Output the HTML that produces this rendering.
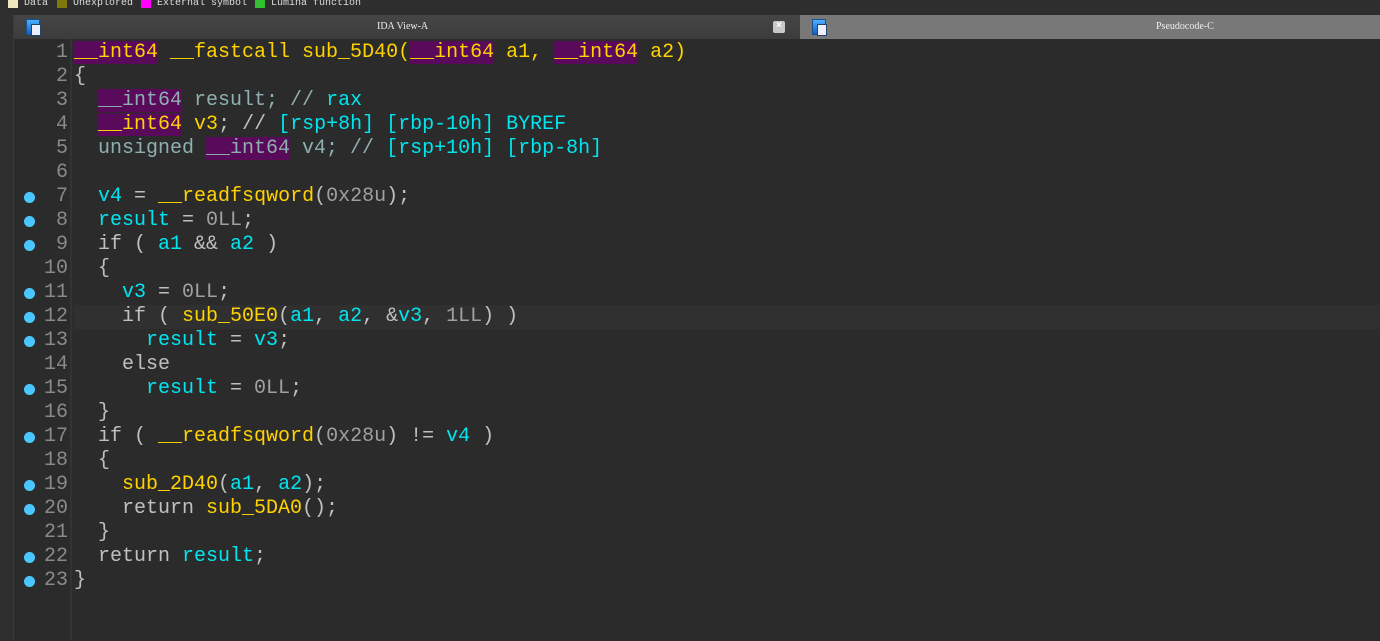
<!DOCTYPE html>
<html><head><style>
body{margin:0;width:1380px;height:641px;background:#2b2b2b;overflow:hidden;position:relative;font-family:"Liberation Mono",monospace}
.legend{position:absolute;top:0;left:0;height:14px;width:1380px;background:#2e2e2e;font-size:10px;color:#ddd;line-height:8px;white-space:pre}
.legend span{position:absolute;top:0}
.sw{width:10px;height:8px}
.left{position:absolute;left:0;top:14px;width:13px;height:627px;background:#2f2f2f;border-right:1px solid #3a3a3a}
.tabs{position:absolute;top:15px;left:14px;width:1366px;height:24px}
.t1{position:absolute;left:0;top:0;width:786px;height:24px;background:linear-gradient(#454545,#3c3c3c)}
.t2{position:absolute;left:786px;top:0;width:580px;height:24px;background:#787878}
.tt{position:absolute;top:6px;font-size:10px;color:#eee;font-family:"Liberation Serif",serif}
.ic{position:absolute;top:4px;width:12px;height:14px;background:linear-gradient(#4ab0ff,#1560c0);border:1px solid #1a4f90}
.ic:after{content:"";position:absolute;left:4px;top:4px;width:8px;height:10px;background:#eef;border:1px solid #246}
.x{position:absolute;left:759px;top:6px;width:12px;height:12px;background:#c8c8c8;border-radius:2px;color:#fff;font-size:10px;line-height:12px;text-align:center;font-weight:bold}
.code{position:absolute;top:41px;left:14px;width:1366px}
.gut{position:absolute;left:70px;top:39px;width:2px;height:602px;background:#333}
.ln{height:24px;line-height:24px;font-size:20px;white-space:pre;position:relative}
.n{position:absolute;left:0;width:54px;text-align:right;color:#8a8a8a}
.c{position:absolute;left:60px;color:#c0c0c0}
.d{position:absolute;left:10px;top:7px;width:11px;height:11px;border-radius:50%;background:#4cc6ff}
.hl{background:#303030}
.y{color:#ffd200}.v{color:#00e6f0}.g{color:#a0a0a0}.t{color:#8fb0b0}
.p{background:#5a0a5a}
</style></head><body>
<div class="legend"><span class="sw" style="background:#eee8c0;left:8px"></span><span style="left:24px">Data</span><span class="sw" style="background:#80780a;left:57px"></span><span style="left:73px">Unexplored</span><span class="sw" style="background:#ff00ff;left:141px"></span><span style="left:157px">External symbol</span><span class="sw" style="background:#30c030;left:255px"></span><span style="left:271px">Lumina function</span></div>
<div class="left"></div>
<div class="tabs"><div class="t1"><div class="ic" style="left:12px"></div><span class="tt" style="left:363px">IDA View-A</span><div class="x">×</div></div>
<div class="t2"><div class="ic" style="left:12px"></div><span class="tt" style="left:356px">Pseudocode-C</span></div></div>
<div class="gut"></div>
<div class="code">
<div class="ln"><span class="n">1</span><span class="c"><span class="y p">__int64</span> <span class="y">__fastcall sub_5D40(</span><span class="y p">__int64</span><span class="y"> a1, </span><span class="y p">__int64</span><span class="y"> a2)</span></span></div>
<div class="ln"><span class="n">2</span><span class="c">{</span></div>
<div class="ln"><span class="n">3</span><span class="c t">  <span class="p">__int64</span> result; // <span class="v">rax</span></span></div>
<div class="ln"><span class="n">4</span><span class="c">  <span class="y p">__int64</span> <span class="y">v3</span>; // <span class="v">[rsp+8h] [rbp-10h]</span> <span class="v">BYREF</span></span></div>
<div class="ln"><span class="n">5</span><span class="c t">  unsigned <span class="p">__int64</span> v4; // <span class="v">[rsp+10h] [rbp-8h]</span></span></div>
<div class="ln"><span class="n">6</span></div>
<div class="ln"><span class="d"></span><span class="n">7</span><span class="c">  <span class="v">v4</span> = <span class="y">__readfsqword</span>(<span class="g">0x28u</span>);</span></div>
<div class="ln"><span class="d"></span><span class="n">8</span><span class="c">  <span class="v">result</span> = <span class="g">0LL</span>;</span></div>
<div class="ln"><span class="d"></span><span class="n">9</span><span class="c">  if ( <span class="v">a1</span> &amp;&amp; <span class="v">a2</span> )</span></div>
<div class="ln"><span class="n">10</span><span class="c">  {</span></div>
<div class="ln"><span class="d"></span><span class="n">11</span><span class="c">    <span class="v">v3</span> = <span class="g">0LL</span>;</span></div>
<div class="ln"><span class="d"></span><span class="n">12</span><span class="c" style="right:0" ><span style="position:absolute;left:0;right:0;top:0;height:24px" class="hl"></span><span style="position:relative">    if ( <span class="y">sub_50E0</span>(<span class="v">a1</span>, <span class="v">a2</span>, &amp;<span class="v">v3</span>, <span class="g">1LL</span>) )</span></span></div>
<div class="ln"><span class="d"></span><span class="n">13</span><span class="c">      <span class="v">result</span> = <span class="v">v3</span>;</span></div>
<div class="ln"><span class="n">14</span><span class="c">    else</span></div>
<div class="ln"><span class="d"></span><span class="n">15</span><span class="c">      <span class="v">result</span> = <span class="g">0LL</span>;</span></div>
<div class="ln"><span class="n">16</span><span class="c">  }</span></div>
<div class="ln"><span class="d"></span><span class="n">17</span><span class="c">  if ( <span class="y">__readfsqword</span>(<span class="g">0x28u</span>) != <span class="v">v4</span> )</span></div>
<div class="ln"><span class="n">18</span><span class="c">  {</span></div>
<div class="ln"><span class="d"></span><span class="n">19</span><span class="c">    <span class="y">sub_2D40</span>(<span class="v">a1</span>, <span class="v">a2</span>);</span></div>
<div class="ln"><span class="d"></span><span class="n">20</span><span class="c">    return <span class="y">sub_5DA0</span>();</span></div>
<div class="ln"><span class="n">21</span><span class="c">  }</span></div>
<div class="ln"><span class="d"></span><span class="n">22</span><span class="c">  return <span class="v">result</span>;</span></div>
<div class="ln"><span class="d"></span><span class="n">23</span><span class="c">}</span></div>
</div>
</body></html>
